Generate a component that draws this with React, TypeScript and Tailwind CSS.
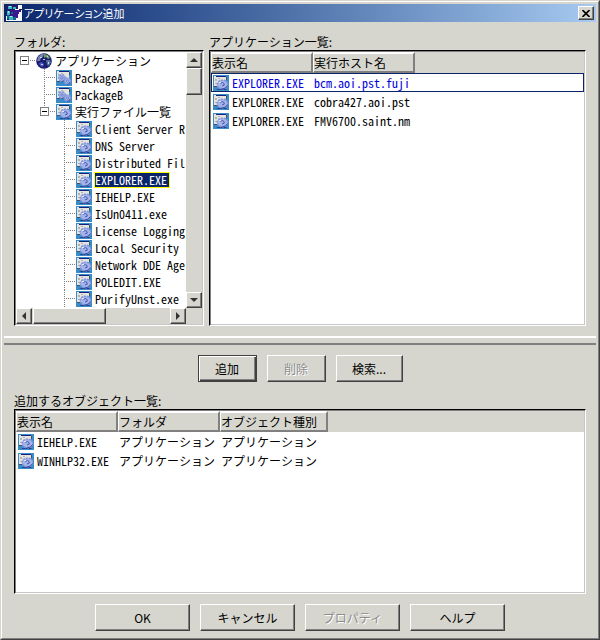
import React from "react";
import clsx from "clsx";

const raised =
  "border border-t-white border-l-white border-r-[#404040] border-b-[#404040] shadow-[inset_-1px_-1px_0_#808080] bg-[#d6d6ce]";
const focused =
  "border border-[#404040] shadow-[inset_1px_1px_0_#fff,inset_-1px_-1px_0_#404040,inset_-2px_-2px_0_#808080] bg-[#d6d6ce]";
const sunken =
  "border border-t-black border-l-black border-r-white border-b-white p-px shadow-[inset_1px_1px_0_#808080,inset_-1px_-1px_0_#c6c6c6] bg-white";
const mono =
  "font-['Noto_Sans_Mono_CJK_JP','Noto_Sans_CJK_JP',monospace] [font-feature-settings:'hwid']";

type T_Node = {
  name: string;
  level: number;
  icon: "globe" | "package" | "exe";
  box?: boolean;
};

const nodes: T_Node[] = [
  { name: "アプリケーション", level: 0, icon: "globe", box: true },
  { name: "PackageA", level: 1, icon: "package" },
  { name: "PackageB", level: 1, icon: "package" },
  { name: "実行ファイル一覧", level: 1, icon: "exe", box: true },
  { name: "Client Server R", level: 2, icon: "exe" },
  { name: "DNS Server", level: 2, icon: "exe" },
  { name: "Distributed Fil", level: 2, icon: "exe" },
  { name: "EXPLORER.EXE", level: 2, icon: "exe" },
  { name: "IEHELP.EXE", level: 2, icon: "exe" },
  { name: "IsUn0411.exe", level: 2, icon: "exe" },
  { name: "License Logging", level: 2, icon: "exe" },
  { name: "Local Security", level: 2, icon: "exe" },
  { name: "Network DDE Age", level: 2, icon: "exe" },
  { name: "POLEDIT.EXE", level: 2, icon: "exe" },
  { name: "PurifyUnst.exe", level: 2, icon: "exe" },
];

const hosts = [
  { name: "EXPLORER.EXE", host: "bcm.aoi.pst.fuji" },
  { name: "EXPLORER.EXE", host: "cobra427.aoi.pst" },
  { name: "EXPLORER.EXE", host: "FMV6700.saint.nm" },
];

const objects = [
  { name: "IEHELP.EXE", folder: "アプリケーション", kind: "アプリケーション" },
  { name: "WINHLP32.EXE", folder: "アプリケーション", kind: "アプリケーション" },
];

function Gear({ x, y, r }: { x: number; y: number; r: number }) {
  return (
    <g>
      <circle
        cx={x}
        cy={y}
        r={r}
        fill="#a4b4ea"
        stroke="#8496dc"
        strokeWidth="1.6"
        strokeDasharray="2 1"
      />
      <path
        d={`M${x + r - 0.5} ${y + 1}a${r} ${r} 0 0 1 ${-r} ${r - 0.5}`}
        fill="none"
        stroke="#4050a0"
      />
      <circle cx={x} cy={y} r={r / 3} fill="#dce2fa" stroke="#5566b4" strokeWidth="0.8" />
    </g>
  );
}

function AppIcon({ pack = false }: { pack?: boolean }) {
  return (
    <svg width="16" height="16" viewBox="0 0 16 16" className="shrink-0" aria-hidden="true">
      <path d="M0 0h16v16H0z" fill="#3a8cc8" />
      <path d="M1 1h12v10H1z" fill="#e4e4e0" />
      <path d="M3 1h10v1H3z" fill="#18227c" />
      <path d="M2 4h2v2H2zM5 3h2v1H5zM2 8h2v1H2z" fill="#b4b4ac" />
      <path d="M1 11h3v1H1zM13 2h1v3h-1z" fill="#44505c" />
      {pack ? (
        <>
          <Gear x={6} y={8} r={3.2} />
          <Gear x={11.5} y={11} r={3} />
        </>
      ) : (
        <>
          <path d="M3 14h10l1 1H5z" fill="#26428c" />
          <ellipse
            cx="9.5"
            cy="9.5"
            rx="5.4"
            ry="4.4"
            fill="#a4b4ea"
            stroke="#8092d8"
            strokeWidth="1.4"
            strokeDasharray="2 1"
          />
          <path d="M14.5 10.5q-1.5 3.5-6 3.5" fill="none" stroke="#4050a0" />
          <path d="M7.5 8.5q2-2 3.5 0t-2 2.5" fill="none" stroke="#4456ac" />
          <path d="M6 7h2v1H6z" fill="#e4eaff" />
        </>
      )}
    </svg>
  );
}

function GlobeIcon() {
  return (
    <svg width="16" height="16" viewBox="0 0 16 16" className="shrink-0" aria-hidden="true">
      <circle cx="8" cy="8" r="7.8" fill="#1c1c70" />
      <path d="M2 4l3-3 3 0-1 3-2 1-1 3-3 0z" fill="#7484a8" />
      <path d="M8 1l4 1 2 3-2 1-2-2-2 1z" fill="#6c9c64" />
      <path d="M3 10l3-1 2 2-1 3-3-1z" fill="#4454bc" />
      <path d="M10 7l4 0 1 2-2 4-2-1z" fill="#54709c" />
      <path d="M4 4h2v1H4zM7 6h2v1H7zM11 3h1v1h-1zM5 11h2v1H5zM12 9h1v2h-1z" fill="#ccd4e8" />
    </svg>
  );
}

function TitleIcon() {
  return (
    <svg
      width="16"
      height="16"
      viewBox="0 0 16 16"
      shapeRendering="crispEdges"
      className="shrink-0"
      aria-hidden="true"
    >
      <path d="M0 0h16v16H0z" fill="#f4f8ff" />
      <path d="M0 0h12v4H9v8H6v3H1v-4H0z" fill="#201c68" />
      <path d="M5 5h10v2h-2v2h-1v4H8v-2H5z" fill="#3c1890" />
      <path d="M2 1h4v3H2zM1 6h3v4H1zM7 2h3v2H7zM3 11h4v4H3z" fill="#34b4c4" />
      <path d="M3 1h2v1H3zM2 6h1v2H2zM4 11h2v1H4z" fill="#a4f4f4" />
      <path d="M1 10h2v4H1zM7 12h3v3H7zM5 7h2v2H5z" fill="#186484" />
      <path d="M13 4h3v1h-3z" fill="#181040" />
    </svg>
  );
}

// dotted branch in front of a node, with the fold box when it has children
function Branch({ level, box, last }: { level: number; box?: boolean; last?: boolean }) {
  return (
    <svg
      width="16"
      height="17"
      viewBox="0 0 16 17"
      shapeRendering="crispEdges"
      className="shrink-0"
      aria-hidden="true"
    >
      {level > 0 && (
        <path
          d={last ? "M4.5 0V8" : "M4.5 0V17"}
          stroke="#808080"
          strokeDasharray="1 1"
        />
      )}
      <path d="M4 8.5H15" stroke="#808080" strokeDasharray="1 1" />
      {box && (
        <>
          <path d="M.5 4.5h8v8h-8z" fill="#fff" stroke="#808080" />
          <path d="M2 8.5h5" stroke="#000" />
        </>
      )}
    </svg>
  );
}

function TreeNode({
  node,
  selected,
  onSelect,
}: {
  node: T_Node;
  selected: boolean;
  onSelect: () => void;
}) {
  const { name, level, icon, box } = node;
  return (
    <li
      role="treeitem"
      aria-selected={selected}
      onClick={onSelect}
      className={clsx("flex h-[17px] items-center whitespace-nowrap", {
        "pl-1": level === 0,
        "pl-6": level === 1,
        "pl-11": level === 2,
      })}
    >
      <Branch level={level} box={box} last={level === 1 && box} />
      {icon === "globe" ? <GlobeIcon /> : <AppIcon pack={icon === "package"} />}
      <span
        className={clsx(
          "ml-[2px] h-4 border leading-[14px]",
          selected ? "border-[#ffff00] bg-[#0a246a] pr-[2px] text-white" : "border-transparent"
        )}
      >
        {name}
      </span>
    </li>
  );
}

function ScrollButton({ label, d }: { label: string; d: string }) {
  return (
    <button
      type="button"
      aria-label={label}
      className={clsx(raised, "flex size-4 shrink-0 items-center justify-center")}
    >
      <svg width="8" height="8" viewBox="0 0 8 8" aria-hidden="true">
        <path d={d} fill="#333" />
      </svg>
    </button>
  );
}

function PushButton({
  children,
  className,
  disabled,
  primary,
}: {
  children: React.ReactNode;
  className?: string;
  disabled?: boolean;
  primary?: boolean;
}) {
  return (
    <button
      type="button"
      disabled={disabled}
      className={clsx(
        primary ? focused : raised,
        "h-[27px] text-center leading-4",
        disabled && "text-[#8c8c8c] [text-shadow:1px_1px_0_#fff]",
        className
      )}
    >
      {children}
    </button>
  );
}

function HeaderCell({ children, className }: { children: React.ReactNode; className: string }) {
  return (
    <th
      scope="col"
      className={clsx(
        "h-[21px] border-t-2 border-r-2 border-b-2 border-l border-t-white border-r-[#808080] border-b-[#808080] border-l-white bg-[#d6d6ce] p-0 text-left font-normal whitespace-nowrap",
        className
      )}
    >
      {children}
    </th>
  );
}

function NameCell({ name }: { name: string }) {
  return (
    <td className="p-0">
      <div className="flex items-center gap-[3px] pl-[2px]">
        <AppIcon />
        {name}
      </div>
    </td>
  );
}

export default function App() {
  const [current, setCurrent] = React.useState(7);
  const [row, setRow] = React.useState(0);

  return (
    <main className="flex h-screen min-h-[480px] flex-col border border-t-[#d6d6ce] border-r-[#404040] border-b-[#404040] border-l-[#d6d6ce] bg-[#d6d6ce] font-['Noto_Sans_CJK_JP',sans-serif] text-[12px] leading-4 text-black">
      <div className="flex min-h-0 flex-1 flex-col border border-t-white border-r-[#808080] border-b-[#808080] border-l-white px-[2px] pt-[2px]">
        <header className="flex h-[18px] shrink-0 items-center bg-linear-to-r from-[#0a246a] to-[#a6caf0] px-[2px]">
          <TitleIcon />
          <h1 className="ml-[2px] flex-1 text-[11px] text-white [font-feature-settings:'palt']">
            アプリケーション追加
          </h1>
          <button
            type="button"
            aria-label="閉じる"
            className={clsx(raised, "flex h-[14px] w-4 items-center justify-center")}
          >
            <svg width="8" height="7" viewBox="0 0 8 7" aria-hidden="true">
              <path d="M.5 0l7 7M7.5 0l-7 7" stroke="#000" strokeWidth="1.6" />
            </svg>
          </button>
        </header>

        <div className="flex min-h-0 flex-[16] gap-[5px] px-[10px] pt-3">
          <section className="flex w-[190px] shrink-0 flex-col">
            <h2 id="folder-label" className="h-4 shrink-0">フォルダ:</h2>
            <div className={clsx(sunken, "flex min-h-0 flex-1 flex-col")}>
              <div className="flex min-h-0 flex-1">
                <ul
                  role="tree"
                  aria-labelledby="folder-label"
                  className={clsx(mono, "min-w-0 flex-1 overflow-hidden")}
                >
                  {nodes.map((node, i) => (
                    <TreeNode
                      key={node.name}
                      node={node}
                      selected={i === current}
                      onSelect={() => setCurrent(i)}
                    />
                  ))}
                </ul>
                <div className="flex w-4 shrink-0 flex-col bg-[#d6d6ce]">
                  <ScrollButton label="上へ" d="M0 6L4 2L8 6z" />
                  <div className={clsx(raised, "h-[27px]")} />
                  <div className="flex-1" />
                  <ScrollButton label="下へ" d="M0 2L4 6L8 2z" />
                </div>
              </div>
              <div className="flex h-4 shrink-0 bg-[#d6d6ce] pr-4">
                <ScrollButton label="左へ" d="M6 0L2 4L6 8z" />
                <div className={clsx(raised, "ml-px w-[73px]")} />
                <div className="flex-1" />
                <ScrollButton label="右へ" d="M2 0L6 4L2 8z" />
              </div>
            </div>
          </section>

          <section className="flex min-w-0 flex-1 flex-col">
            <h2 id="app-label" className="h-4 shrink-0">アプリケーション一覧:</h2>
            <div className={clsx(sunken, "min-h-0 flex-1 overflow-hidden")}>
              <table
                aria-labelledby="app-label"
                className="w-full table-fixed border-separate border-spacing-0"
              >
                <thead className="bg-[#d6d6ce]">
                  <tr>
                    <HeaderCell className="w-[102px]">表示名</HeaderCell>
                    <HeaderCell className="w-[102px]">実行ホスト名</HeaderCell>
                    <th className="p-0" />
                  </tr>
                </thead>
                <tbody className={mono}>
                  {hosts.map((item, i) => (
                    <tr
                      key={item.host}
                      onClick={() => setRow(i)}
                      className={clsx(
                        "h-[19px]",
                        i === row && "text-[#0000e0] outline -outline-offset-1 outline-[#0a246a]"
                      )}
                    >
                      <NameCell name={item.name} />
                      <td className="p-0 pl-px whitespace-nowrap">{item.host}</td>
                      <td className="p-0" />
                    </tr>
                  ))}
                </tbody>
              </table>
            </div>
          </section>
        </div>

        <div className="mt-[10px] h-[9px] shrink-0 border-t-2 border-b-2 border-t-white border-b-[#808080]" />

        <div className="mt-[10px] flex shrink-0 justify-center gap-[10px]">
          <PushButton className="w-[59px]" primary>
            追加
          </PushButton>
          <PushButton className="w-[59px]" disabled>
            削除
          </PushButton>
          <PushButton className="w-[67px]">検索...</PushButton>
        </div>

        <section className="flex min-h-0 flex-[11] flex-col px-[10px] pt-[11px]">
          <h2 id="object-label" className="h-4 shrink-0">追加するオブジェクト一覧:</h2>
          <div className={clsx(sunken, "min-h-0 flex-1 overflow-hidden")}>
            <table
              aria-labelledby="object-label"
              className="w-full table-fixed border-separate border-spacing-0"
            >
              <thead className="bg-[#d6d6ce]">
                <tr>
                  <HeaderCell className="w-[102px]">表示名</HeaderCell>
                  <HeaderCell className="w-[102px]">フォルダ</HeaderCell>
                  <HeaderCell className="w-[108px]">オブジェクト種別</HeaderCell>
                  <th className="p-0" />
                </tr>
              </thead>
              <tbody className={mono}>
                {objects.map((item) => (
                  <tr key={item.name} className="h-[19px]">
                    <NameCell name={item.name} />
                    <td className="p-0 pl-px whitespace-nowrap">{item.folder}</td>
                    <td className="p-0 pl-px whitespace-nowrap">{item.kind}</td>
                    <td className="p-0" />
                  </tr>
                ))}
              </tbody>
            </table>
          </div>
        </section>

        <footer className="flex shrink-0 justify-center gap-[10px] pt-[10px] pb-[7px]">
          <PushButton className="w-[95px]">OK</PushButton>
          <PushButton className="w-[95px]">キャンセル</PushButton>
          <PushButton className="w-[95px]" disabled>
            プロパティ
          </PushButton>
          <PushButton className="w-[95px]">ヘルプ</PushButton>
        </footer>
      </div>
    </main>
  );
}
